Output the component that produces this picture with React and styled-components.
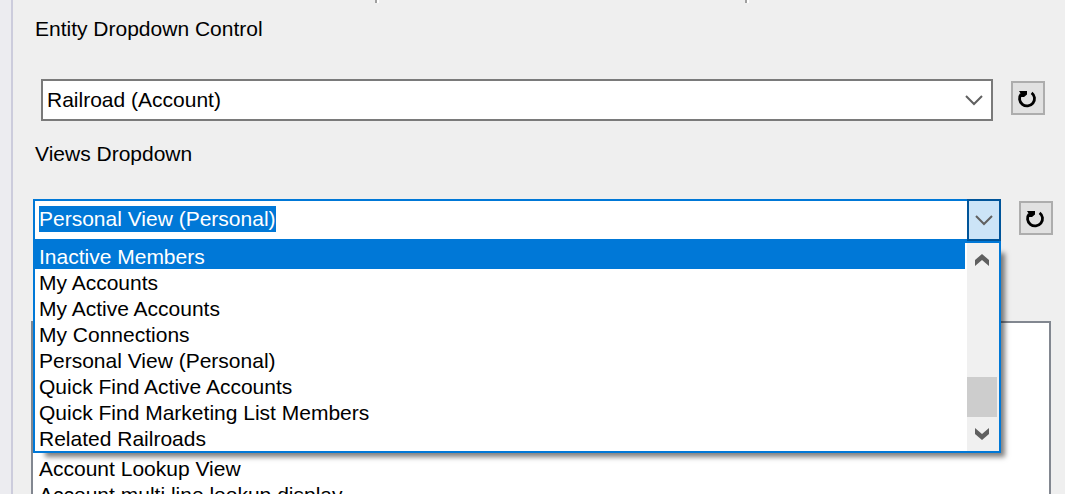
import React, { useEffect, useRef } from "react";
import styled, { createGlobalStyle } from "styled-components";

const GlobalStyle = createGlobalStyle`
  * { box-sizing: border-box; }
  body {
    margin: 0;
    overflow: hidden;
    background: #efefef;
    color: #000;
    font-family: "Liberation Sans", Arial, sans-serif;
    font-size: 21px;
    line-height: 26px;
  }
  button, input, select { font: inherit; color: inherit; margin: 0; }
`;

const Window = styled.div`
  display: flex;
  height: 100vh;
`;

const Gutter = styled.div`
  flex: none;
  width: 13px;
  background: #ececf0;
  border-right: 2px solid #ccccdc;
`;

const Panel = styled.main`
  flex: 1;
  min-width: 0;
  display: flex;
  flex-direction: column;
`;

const ToolStrip = styled.div`
  flex: none;
  display: flex;
  height: 3px;
  margin-bottom: 13px;
`;

const StripSection = styled.div`
  width: ${(p) => p.$width}px;
  border-right: 2px solid #fff;
  box-shadow: inset -2px 0 #a0a0a0;
`;

const Label = styled.label`
  display: block;
  padding-left: 22px;
`;

const FieldRow = styled.div`
  display: flex;
  align-items: flex-start;
  gap: 18px;
  margin: ${(p) => (p.$inset ? "37px 20px 20px 28px" : "32px 12px 0 20px")};
`;

const SelectBox = styled.div`
  flex: 1;
  display: grid;
  align-items: center;
  height: 42px;
  border: 2px solid #7a7a7a;
  background: #fff;

  > * { grid-area: 1 / 1; }
  > svg { justify-self: end; margin-right: 8px; pointer-events: none; }
`;

const Select = styled.select`
  appearance: none;
  width: 100%;
  height: 38px;
  padding: 0 36px 0 4px;
  border: 0;
  outline: 0;
  background: transparent;
`;

const Combo = styled.div`
  position: relative;
  flex: 1;
  display: flex;
  height: 42px;
  background: #fff;
`;

const ComboInput = styled.input`
  flex: 1;
  min-width: 0;
  padding: 0 4px 2px;
  border: 2px solid #0078d7;
  border-right: 0;
  border-radius: 0;
  outline: 0;
  background: #fff;

  &::selection { background: #0078d7; color: #fff; }
`;

const DropButton = styled.button`
  display: grid;
  place-items: center;
  width: 34px;
  padding: 0;
  border: 2px solid #005499;
  background: #cce4f7;
`;

const RefreshButton = styled.button`
  display: grid;
  place-items: center;
  width: 34px;
  height: 34px;
  margin-top: 2px;
  padding: 0;
  border: 2px solid #adadad;
  background: #e1e1e1;
`;

const Popup = styled.div`
  position: absolute;
  z-index: 1;
  top: 100%;
  left: 0;
  right: 0;
  display: flex;
  gap: 2px;
  border: 2px solid #0078d7;
  background: #fff;
  box-shadow: 8px 8px 5px -4px rgba(0, 0, 0, 0.5);
`;

const Options = styled.ul`
  flex: 1;
  margin: 0;
  padding: 0;
  list-style: none;
`;

const Option = styled.li`
  height: 26px;
  padding-left: 4px;
  line-height: 28px;
  white-space: nowrap;
  color: ${(p) => (p.$active ? "#fff" : "#000")};
  background: ${(p) => (p.$active ? "#0078d7" : "transparent")};
`;

const ScrollBar = styled.div`
  display: flex;
  flex-direction: column;
  width: 32px;
  background: #f0f0f0;
`;

const ScrollButton = styled.button`
  display: grid;
  place-items: center;
  width: 30px;
  height: 34px;
  padding: 0;
  border: 0;
  background: transparent;
`;

const Thumb = styled.div`
  width: 30px;
  height: 40px;
  margin-top: auto;
  background: #cdcdcd;
`;

const ViewList = styled.ul`
  flex: 1;
  margin: 80px 14px 0 18px;
  padding: 132px 0 0 2px;
  list-style: none;
  border: 2px solid #828790;
  border-bottom: 0;
  background: #fff;
`;

const Chevron = () => (
  <svg width="18" height="12" viewBox="0 0 18 12" fill="none" stroke="#606060" strokeWidth="2" aria-hidden="true">
    <path d="M1 2 9 10 17 2" />
  </svg>
);

const ScrollArrow = ({ down }) => (
  <svg width="14" height="12" viewBox="0 0 14 12" fill="#606060" aria-hidden="true">
    <path d={down ? "M0 0 7 6 14 0V6L7 12 0 6Z" : "M0 12 7 6 14 12V6L7 0 0 6Z"} />
  </svg>
);

const RefreshIcon = () => (
  <svg width="30" height="30" viewBox="0 0 30 30" aria-hidden="true">
    <path d="M18.6 9.8A7.5 7.3 0 1 1 8.2 11" fill="none" stroke="#000" strokeWidth="2.8" />
    <path d="M6 8H14V11.5L11 14H8V11Z" fill="#000" />
  </svg>
);

const viewNames = [
  "Inactive Members",
  "My Accounts",
  "My Active Accounts",
  "My Connections",
  "Personal View (Personal)",
  "Quick Find Active Accounts",
  "Quick Find Marketing List Members",
  "Related Railroads",
];

export default function App() {
  const viewInput = useRef(null);

  useEffect(() => {
    viewInput.current.focus({ preventScroll: true });
    viewInput.current.select();
  }, []);

  return (
    <Window>
      <GlobalStyle />
      <Gutter />
      <Panel>
        <ToolStrip>
          <StripSection $width={366} />
          <StripSection $width={370} />
        </ToolStrip>

        <Label htmlFor="entity">Entity Dropdown Control</Label>
        <FieldRow $inset>
          <SelectBox>
            <Select id="entity" defaultValue="account">
              <option value="account">Railroad (Account)</option>
            </Select>
            <Chevron />
          </SelectBox>
          <RefreshButton type="button" aria-label="Refresh entities">
            <RefreshIcon />
          </RefreshButton>
        </FieldRow>

        <Label htmlFor="view">Views Dropdown</Label>
        <FieldRow>
          <Combo>
            <ComboInput
              id="view"
              ref={viewInput}
              role="combobox"
              aria-expanded="true"
              aria-controls="view-options"
              defaultValue="Personal View (Personal)"
            />
            <DropButton type="button" aria-label="Close views">
              <Chevron />
            </DropButton>
            <Popup>
              <Options id="view-options" role="listbox">
                {viewNames.map((name, i) => (
                  <Option key={name} role="option" aria-selected={i === 0} $active={i === 0}>
                    {name}
                  </Option>
                ))}
              </Options>
              <ScrollBar>
                <ScrollButton type="button" aria-label="Scroll up">
                  <ScrollArrow />
                </ScrollButton>
                <Thumb />
                <ScrollButton type="button" aria-label="Scroll down">
                  <ScrollArrow down />
                </ScrollButton>
              </ScrollBar>
            </Popup>
          </Combo>
          <RefreshButton type="button" aria-label="Refresh views">
            <RefreshIcon />
          </RefreshButton>
        </FieldRow>

        <ViewList>
          <Option>Account Lookup View</Option>
          <Option>Account multi line lookup display</Option>
        </ViewList>
      </Panel>
    </Window>
  );
}
